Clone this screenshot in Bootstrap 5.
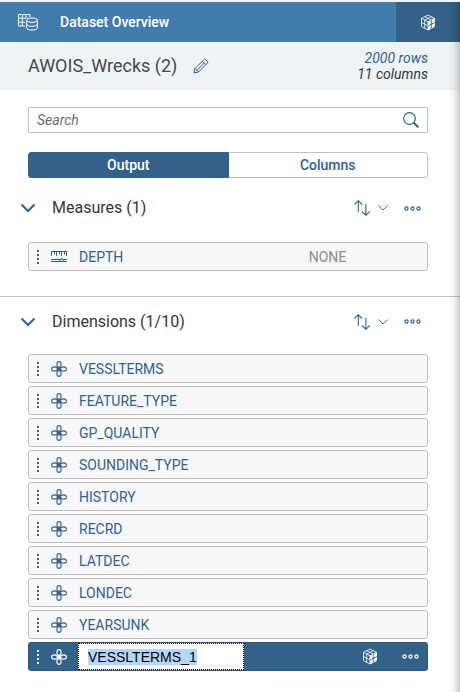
<!DOCTYPE html>
<html lang="en">
<head>
<meta charset="utf-8">
<meta name="viewport" content="width=device-width, initial-scale=1">
<title>Dataset Overview</title>
<link href="https://cdn.jsdelivr.net/npm/bootstrap@5.3.0/dist/css/bootstrap.min.css" rel="stylesheet">
<style>
  :root { --brand: #427cac; --deep: #346187; --line: #bfbfbf; }
  body { font-family: Roboto, "Liberation Sans", sans-serif; font-size: 14px; line-height: 16px; color: #32363a; background: #fff; }
  svg { display: block; flex: none; }
  .panel-wrap { border-top: 2px solid #eef3f7; min-height: 100vh; }
  .edge-shade { width: 12px; background: linear-gradient(to right, rgba(0,0,0,0), rgba(0,0,0,.05) 50%, rgba(0,0,0,.2)); pointer-events: none; }
  .plain-btn { border: 0; background: none; padding: 0; color: var(--deep); }
  .title-bar { background: var(--brand); height: 40px; padding-left: 18px; }
  .title-bar h1 { font-size: 14px; line-height: 16px; font-weight: 500; margin-left: 22px; }
  .cube-tab { width: 64px; background: var(--deep); }
  .info-bar { background: #eef3f7; height: 48px; }
  .info-bar h2 { font-size: 18px; line-height: 24px; color: #45484d; font-weight: 400; }
  .side-pad { padding-left: 28px; padding-right: 32px; }
  .blue-text { color: var(--deep); }
  .search-box { margin-top: 17px; height: 26px; border: 1px solid var(--line); padding: 0 8px; }
  .search-box input { border: 0; outline: 0; background: none; padding: 0; min-width: 0; }
  .search-box input::placeholder { font-style: italic; color: #6a6d70; opacity: 1; }
  .switcher { margin-top: 19px; height: 26px; }
  .switcher .btn { font-size: 14px; line-height: 16px; font-weight: 500; padding: 4px; border-radius: 3px; color: var(--deep); border-color: var(--line); }
  .switcher .btn.active { background: var(--deep); border-color: var(--deep); color: #fff; }
  .group-head { height: 60px; padding-left: 20px; padding-right: 39px; }
  .group-head h3 { font-size: 16px; line-height: 20px; font-weight: 400; }
  .group-head .tools { gap: 8px; }
  .split { border-top: 1px solid #c4c4c4; margin-top: 25px; }
  .split .group-head { height: 57px; }
  .field-list { gap: 3px; }
  .field { height: 29px; border: 1px solid var(--line); border-radius: 3px; background: #f7f7f7; color: var(--deep); padding-left: 8px; }
  .field .type-icon { margin: 0 12px; }
  .field.chosen { background: var(--deep); border-color: #2c5578; color: #fff; padding-right: 8px; }
  .field.chosen .type-icon { margin-right: 11px; }
  .none-text { color: #8c8c8c; padding-right: 4px; }
  .rename { width: 166px; height: 27px; border: 1px dotted #000; border-radius: 0; outline: 0; padding: 0 9px; color: #000; background: #fff; font-family: "Liberation Sans", sans-serif; font-size: 14px; }
  .rename::selection { background: #b3d7ff; color: #000; }
</style>
<script src="https://cdn.jsdelivr.net/npm/bootstrap@5.3.0/dist/js/bootstrap.bundle.min.js"></script>
</head>
<body>
<svg class="d-none" aria-hidden="true">
  <symbol id="grip" viewBox="0 0 2 14"><path d="M0 0h2v2H0zM0 4h2v2H0zM0 8h2v2H0zM0 12h2v2H0z" fill="currentColor"/></symbol>
  <symbol id="dim" viewBox="0 0 16 16"><g fill="none" stroke="currentColor" stroke-width="1.1"><ellipse cx="8" cy="3.500" rx="2.100" ry="2.900"/><ellipse cx="8" cy="12.500" rx="2.100" ry="2.900"/><ellipse cx="3.500" cy="8" rx="2.900" ry="2.100"/><ellipse cx="12.500" cy="8" rx="2.900" ry="2.100"/></g><circle cx="8" cy="8" r="2" fill="currentColor"/></symbol>
  <symbol id="ruler" viewBox="0 0 16 14"><path d="M0 1.500H16M.500 1v5M3.500 1v3.500M5.500 1v5M8.500 1v3.500M10.500 1v5M13.500 1v3.500M15.500 1v5M0 9.500h9M12 9.500h4M0 11.500h16M10.500 8l-2.200 3.500h4.400z" fill="none" stroke="currentColor"/></symbol>
  <symbol id="down" viewBox="0 0 16 10"><path d="M1.500 1.500L8 8l6.500-6.500" fill="none" stroke="currentColor" stroke-width="2"/></symbol>
  <symbol id="down-thin" viewBox="0 0 10 6"><path d="M.500.500L5 5 9.500.500" fill="none" stroke="currentColor" stroke-width=".9"/></symbol>
  <symbol id="sort" viewBox="0 0 16 16"><path d="M.500 4.500L4.300.700 8.100 4.500M4.300 1v11M8.100 11.500l3.800 3.800 3.800-3.800M11.900 15V4" fill="none" stroke="currentColor" stroke-width="1.1"/></symbol>
  <symbol id="dots" viewBox="0 0 17 5"><g fill="none" stroke="currentColor" stroke-width="1.200"><circle cx="2.500" cy="2.500" r="1.600"/><circle cx="8.500" cy="2.500" r="1.600"/><circle cx="14.500" cy="2.500" r="1.600"/></g></symbol>
  <symbol id="cube" viewBox="0 0 16 16"><path d="M8 7.500L14.500 4v8L8 15.700z" fill="currentColor"/><path d="M8 .600L14.500 3.800v8.400L8 15.500 1.500 12.200V3.800zM1.500 3.800L8 7.300l6.500-3.500M8 7.300v8.200M4.700 5.500v8.400M1.500 8L8 11.400M4.700 2.200l6.500 3.400M11.300 2.200L4.700 5.600" fill="none" stroke="currentColor" stroke-width=".8"/><path d="M11.300 5.500v8.700M8 11.500L14.800 8" fill="none" stroke="#346187" stroke-width=".9"/></symbol>
</svg>

<div class="panel-wrap position-relative">
  <header class="title-bar d-flex align-items-center text-white">
    <svg width="20" height="17" viewBox="0 0 20 17" fill="none" stroke="currentColor"><path d="M.500.500h11.500v3M.500.500v11.500H7M.500 4.200H8M.500 8.200H7M4.300.500V12M8.200.500v3.600"/><ellipse cx="14" cy="6.200" rx="5.500" ry="2.200"/><path d="M8.500 6.200v7.600c0 1.300 2.500 2.300 5.500 2.300s5.500-1 5.500-2.300V6.200M8.500 10c0 1.300 2.500 2.300 5.500 2.300s5.500-1 5.500-2.300"/></svg>
    <h1 class="mb-0 flex-fill">Dataset Overview</h1>
    <button class="plain-btn cube-tab h-100 d-flex align-items-center justify-content-center text-white" type="button" aria-label="Model view"><svg width="16" height="17"><use href="#cube"/></svg></button>
  </header>

  <section class="info-bar side-pad d-flex align-items-center">
    <h2 class="mb-0">AWOIS_Wrecks (2)</h2>
    <button class="plain-btn ms-3" type="button" aria-label="Rename dataset"><svg width="16" height="16" viewBox="0 0 16 16" fill="none" stroke="currentColor"><path d="M1 15l1-4.500L11 1.500c.5-.5 1-.5 1.500 0l2 2c.5.5.5 1 0 1.500L5.500 14zM2 10.500L5.500 14M9.300 3.200l3.500 3.500M4 12.200l7-7"/></svg></button>
    <div class="ms-auto text-end fst-italic"><div class="blue-text">2000 rows</div><div>11 columns</div></div>
  </section>

  <main>
    <div class="side-pad">
      <form class="search-box d-flex align-items-center" role="search">
        <input class="flex-fill" type="text" placeholder="Search" aria-label="Search">
        <button class="plain-btn" type="button" aria-label="Find"><svg width="16" height="16" viewBox="0 0 16 16" fill="none" stroke="currentColor"><circle cx="6.500" cy="6.500" r="5.800" stroke-width="1.200"/><path d="M10.700 10.700l4.600 4.600" stroke-width="2"/></svg></button>
      </form>
      <div class="switcher btn-group w-100" role="group" aria-label="View">
        <button class="btn w-50 active" type="button">Output</button>
        <button class="btn w-50" type="button">Columns</button>
      </div>
    </div>

    <section>
      <div class="group-head d-flex align-items-center">
        <button class="plain-btn" type="button" aria-label="Collapse measures"><svg width="16" height="10"><use href="#down"/></svg></button>
        <h3 class="mb-0 ms-3">Measures (1)</h3>
        <div class="tools ms-auto d-flex align-items-center">
          <button class="plain-btn d-flex align-items-center gap-2" type="button" aria-label="Sort measures"><svg width="16" height="16"><use href="#sort"/></svg><svg width="10" height="6"><use href="#down-thin"/></svg></button>
          <button class="plain-btn ms-2" type="button" aria-label="More"><svg width="17" height="5"><use href="#dots"/></svg></button>
        </div>
      </div>
      <div class="side-pad pt-1">
        <div class="field d-flex align-items-center">
          <div class="w-50 d-flex align-items-center"><svg width="2" height="14"><use href="#grip"/></svg><svg class="type-icon" width="16" height="14"><use href="#ruler"/></svg>DEPTH</div>
          <div class="w-50 text-center none-text">NONE</div>
        </div>
      </div>
    </section>

    <section class="split">
      <div class="group-head d-flex align-items-center pb-2">
        <button class="plain-btn" type="button" aria-label="Collapse dimensions"><svg width="16" height="10"><use href="#down"/></svg></button>
        <h3 class="mb-0 ms-3">Dimensions (1/10)</h3>
        <div class="tools ms-auto d-flex align-items-center">
          <button class="plain-btn d-flex align-items-center gap-2" type="button" aria-label="Sort dimensions"><svg width="16" height="16"><use href="#sort"/></svg><svg width="10" height="6"><use href="#down-thin"/></svg></button>
          <button class="plain-btn ms-2" type="button" aria-label="More"><svg width="17" height="5"><use href="#dots"/></svg></button>
        </div>
      </div>
      <ul class="field-list side-pad list-unstyled d-flex flex-column mb-0">
        <li class="field d-flex align-items-center"><svg width="2" height="14"><use href="#grip"/></svg><svg class="type-icon" width="16" height="16"><use href="#dim"/></svg>VESSLTERMS</li>
        <li class="field d-flex align-items-center"><svg width="2" height="14"><use href="#grip"/></svg><svg class="type-icon" width="16" height="16"><use href="#dim"/></svg>FEATURE_TYPE</li>
        <li class="field d-flex align-items-center"><svg width="2" height="14"><use href="#grip"/></svg><svg class="type-icon" width="16" height="16"><use href="#dim"/></svg>GP_QUALITY</li>
        <li class="field d-flex align-items-center"><svg width="2" height="14"><use href="#grip"/></svg><svg class="type-icon" width="16" height="16"><use href="#dim"/></svg>SOUNDING_TYPE</li>
        <li class="field d-flex align-items-center"><svg width="2" height="14"><use href="#grip"/></svg><svg class="type-icon" width="16" height="16"><use href="#dim"/></svg>HISTORY</li>
        <li class="field d-flex align-items-center"><svg width="2" height="14"><use href="#grip"/></svg><svg class="type-icon" width="16" height="16"><use href="#dim"/></svg>RECRD</li>
        <li class="field d-flex align-items-center"><svg width="2" height="14"><use href="#grip"/></svg><svg class="type-icon" width="16" height="16"><use href="#dim"/></svg>LATDEC</li>
        <li class="field d-flex align-items-center"><svg width="2" height="14"><use href="#grip"/></svg><svg class="type-icon" width="16" height="16"><use href="#dim"/></svg>LONDEC</li>
        <li class="field d-flex align-items-center"><svg width="2" height="14"><use href="#grip"/></svg><svg class="type-icon" width="16" height="16"><use href="#dim"/></svg>YEARSUNK</li>
        <li class="field chosen d-flex align-items-center"><svg width="2" height="14"><use href="#grip"/></svg><svg class="type-icon" width="16" height="16"><use href="#dim"/></svg>
          <input class="rename" id="rename" type="text" value="VESSLTERMS_1" aria-label="Dimension name" spellcheck="false">
          <button class="plain-btn text-white ms-auto" type="button" aria-label="Model view"><svg width="16" height="17"><use href="#cube"/></svg></button>
          <button class="plain-btn text-white ms-4" type="button" aria-label="More"><svg width="17" height="5"><use href="#dots"/></svg></button>
        </li>
      </ul>
    </section>
  </main>
  <div class="edge-shade position-absolute top-0 end-0 h-100"></div>
</div>
<script>
  const nameBox = document.getElementById('rename');
  nameBox.focus();
  nameBox.select();
</script>
</body>
</html>
